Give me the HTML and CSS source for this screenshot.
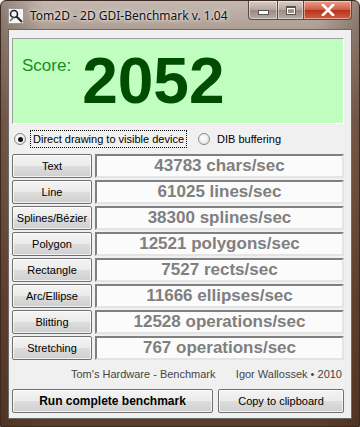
FILE: index.html
```html
<!DOCTYPE html>
<html>
<head>
    <title>Tom2D - 2D GDI-Benchmark v. 1.04</title>
    <link rel="stylesheet" href="styles.css">
</head>
<body>
<div class="window">
    <div class="titlebar">
        <svg class="app-icon" width="16" height="16" viewBox="0 0 16 16">
            <rect x="0.5" y="0.5" width="15" height="15" fill="#f4f4f4" stroke="#9a9a9a"/>
            <circle cx="6" cy="6" r="3.5" fill="none" stroke="#222" stroke-width="1.6"/>
            <path d="M8.5 8.5 L14 14" stroke="#222" stroke-width="2"/>
            <path d="M2 13 L6 9" stroke="#666" stroke-width="1.4"/>
        </svg>
        <span class="title">Tom2D - 2D GDI-Benchmark v. 1.04</span>
        <div class="caption-buttons">
            <div class="cap cap-min"><span class="min-bar"></span></div>
            <div class="cap cap-max"><span class="max-box"></span></div>
            <div class="cap cap-close">
                <svg width="14" height="12" viewBox="0 0 14 12">
                    <path d="M2 1 L12 11 M12 1 L2 11" stroke="#fff" stroke-width="2.6" stroke-linecap="square"/>
                </svg>
            </div>
        </div>
    </div>

    <div class="client">
        <div class="score-panel">
            <span class="score-label">Score:</span>
            <span class="score-value">2052</span>
        </div>

        <div class="mode-row">
            <label class="radio focused"><span class="radio-dot checked"></span><span class="radio-text">Direct drawing to visible device</span></label>
            <label class="radio"><span class="radio-dot"></span><span class="radio-text">DIB buffering</span></label>
        </div>

        <div class="results">
            <button class="btn">Text</button><div class="value">43783 chars/sec</div>
            <button class="btn">Line</button><div class="value">61025 lines/sec</div>
            <button class="btn">Splines/Bézier</button><div class="value">38300 splines/sec</div>
            <button class="btn">Polygon</button><div class="value">12521 polygons/sec</div>
            <button class="btn">Rectangle</button><div class="value">7527 rects/sec</div>
            <button class="btn">Arc/Ellipse</button><div class="value">11666 ellipses/sec</div>
            <button class="btn">Blitting</button><div class="value">12528 operations/sec</div>
            <button class="btn">Stretching</button><div class="value">767 operations/sec</div>
        </div>

        <div class="footer">
            <span>Tom's Hardware - Benchmark</span>
            <span>Igor Wallossek &bull; 2010</span>
        </div>

        <div class="actions">
            <button class="btn btn-run">Run complete benchmark</button>
            <button class="btn btn-copy">Copy to clipboard</button>
        </div>
    </div>
</div>
</body>
</html>
```

FILE: styles.css
```css
html, body {
    margin: 0;
    padding: 0;
}
body {
    width: 360px;
    height: 427px;
    overflow: hidden;
    font-family: "Liberation Sans", Arial, sans-serif;
}
.window {
    width: 360px;
    height: 427px;
    box-sizing: border-box;
    background:
        linear-gradient(to right, rgba(60,35,20,0.35), rgba(0,0,0,0) 12%, rgba(0,0,0,0) 88%, rgba(60,35,20,0.35)),
        linear-gradient(to bottom, #c4b8b0 0px, #ae9e94 28px, #8c6e5c 120px, #6e4c38 300px, #5a3c2a 427px);
    border: 1px solid #3c2a20;
    border-radius: 6px 6px 0 0;
    display: flex;
    flex-direction: column;
}
.titlebar {
    height: 28px;
    display: flex;
    align-items: flex-start;
    position: relative;
}
.app-icon {
    margin: 7px 0 0 7px;
}
.title {
    margin: 6px 0 0 6px;
    font-family: "Noto Sans", "Open Sans", sans-serif;
    font-size: 12px;
    color: #111;
    text-shadow: 0 0 6px rgba(255,255,255,0.9), 0 0 3px rgba(255,255,255,0.8);
}
.caption-buttons {
    position: absolute;
    top: 0;
    right: 7px;
    display: flex;
}
.cap {
    height: 18px;
    border: 1px solid #5a4a42;
    border-top: none;
    display: flex;
    align-items: center;
    justify-content: center;
    box-shadow: inset 0 0 0 1px rgba(255,255,255,0.45);
}
.cap-min {
    width: 28px;
    border-radius: 0 0 0 4px;
    background: linear-gradient(to bottom, #d8cec8, #b4a49a 50%, #9c8a80 51%, #b8aaa2);
}
.cap-max {
    width: 25px;
    border-left: none;
    background: linear-gradient(to bottom, #d8cec8, #b4a49a 50%, #9c8a80 51%, #b8aaa2);
}
.cap-close {
    width: 47px;
    border-left: none;
    border-radius: 0 0 4px 0;
    background: linear-gradient(to bottom, #e8a090, #cf5a44 50%, #b8321c 51%, #d0603e);
}
.min-bar {
    width: 9px;
    height: 3px;
    margin-top: 5px;
    background: #fff;
    border: 1px solid #555;
}
.max-box {
    width: 8px;
    height: 6px;
    border: 1px solid #555;
    border-top-width: 2px;
    background: transparent;
    box-shadow: inset 0 0 0 1px #fff;
}

.client {
    margin: 0 7px 7px 7px;
    flex: 1;
    background: #f0f0f0;
    border: 1px solid #6a6a6a;
    padding: 8px 7px 0 3px;
    display: flex;
    flex-direction: column;
}

.score-panel {
    height: 84px;
    background: #c0ffc0;
    border: 1px solid;
    border-color: #a0a0a0 #ffffff #ffffff #a0a0a0;
    display: flex;
    align-items: center;
}
.score-label {
    margin: -30px 0 0 9px;
    font-size: 17px;
    color: #1c8c1c;
}
.score-value {
    margin-left: 11px;
    font-size: 64px;
    font-weight: bold;
    color: #004c00;
    line-height: 1;
}

.mode-row {
    height: 30px;
    display: flex;
    align-items: center;
    font-size: 11px;
}
.radio {
    display: flex;
    align-items: center;
    color: #000;
}
.radio-dot {
    width: 12px;
    height: 12px;
    border-radius: 50%;
    border: 1px solid #8a8a8a;
    background: radial-gradient(circle at 40% 40%, #ffffff, #dcdcdc);
    box-sizing: border-box;
    position: relative;
    margin-left: 2px;
}
.radio-dot.checked::after {
    content: "";
    position: absolute;
    left: 2.5px;
    top: 2.5px;
    width: 5px;
    height: 5px;
    border-radius: 50%;
    background: #111;
}
.radio-text {
    margin-left: 4px;
    padding: 2px 2px;
    border: 1px dotted transparent;
}
.radio.focused .radio-text {
    border-color: #000;
}
.radio + .radio {
    margin-left: 9px;
}

.results {
    display: grid;
    grid-template-columns: 80px 1fr;
    column-gap: 3px;
    row-gap: 2px;
}
.btn {
    font-family: "Liberation Sans", Arial, sans-serif;
    font-size: 11px;
    color: #000;
    height: 24px;
    padding: 0;
    border: 1px solid #707070;
    border-radius: 2px;
    background: linear-gradient(to bottom, #f4f4f4, #ebebeb 50%, #dddddd 51%, #cfcfcf);
    box-shadow: inset 0 0 0 1px rgba(255,255,255,0.7);
}
.value {
    height: 24px;
    box-sizing: border-box;
    background: #fbfbfb;
    border: 2px solid;
    border-color: #808080 #e4e4e4 #e4e4e4 #808080;
    font-size: 17px;
    font-weight: bold;
    color: #7f7f7f;
    display: flex;
    align-items: center;
    justify-content: center;
}

.footer {
    height: 28px;
    display: flex;
    align-items: center;
    justify-content: space-between;
    padding: 0 2px 0 59px;
    font-size: 11px;
    color: #444;
    white-space: nowrap;
}
.actions {
    display: flex;
    gap: 5px;
    margin-top: 1px;
}
.btn-run {
    width: 201px;
    font-size: 12px;
    font-weight: bold;
}
.btn-copy {
    flex: 1;
}
```
